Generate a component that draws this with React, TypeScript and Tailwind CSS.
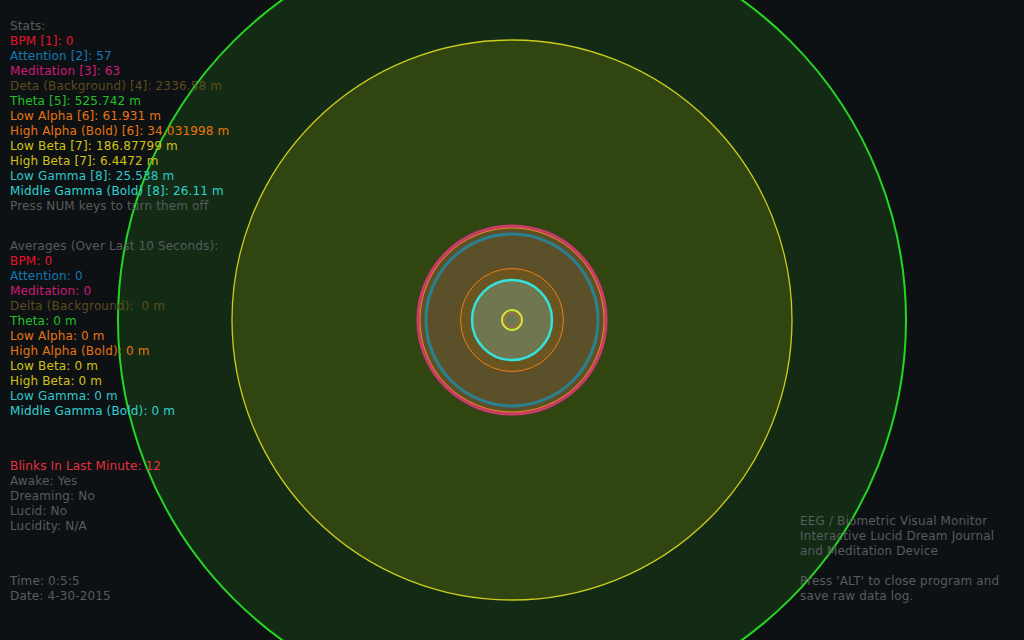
import React from "react";

type Line = { t: string; c: string };

const gray = "text-[#575c5c]";

const stats: Line[] = [
  { t: "Stats:", c: gray },
  { t: "BPM [1]: 0", c: "text-[#e8112b]" },
  { t: "Attention [2]: 57", c: "text-[#1578b0]" },
  { t: "Meditation [3]: 63", c: "text-[#d01a7a]" },
  { t: "Deta (Background) [4]: 2336.58 m", c: "text-[#5c4b1f]" },
  { t: "Theta [5]: 525.742 m", c: "text-[#22c024]" },
  { t: "Low Alpha [6]: 61.931 m", c: "text-[#e87412]" },
  { t: "High Alpha (Bold) [6]: 34.031998 m", c: "text-[#e87412]" },
  { t: "Low Beta [7]: 186.87799 m", c: "text-[#d2c214]" },
  { t: "High Beta [7]: 6.4472 m", c: "text-[#d2c214]" },
  { t: "Low Gamma [8]: 25.538 m", c: "text-[#30c6c6]" },
  { t: "Middle Gamma (Bold) [8]: 26.11 m", c: "text-[#30d2d2]" },
  { t: "Press NUM keys to turn them off", c: gray },
];

const averages: Line[] = [
  { t: "Averages (Over Last 10 Seconds):", c: gray },
  { t: "BPM: 0", c: "text-[#e8112b]" },
  { t: "Attention: 0", c: "text-[#1578b0]" },
  { t: "Meditation: 0", c: "text-[#d01a7a]" },
  { t: "Delta (Background):  0 m", c: "text-[#5c4b1f]" },
  { t: "Theta: 0 m", c: "text-[#22c024]" },
  { t: "Low Alpha: 0 m", c: "text-[#e87412]" },
  { t: "High Alpha (Bold): 0 m", c: "text-[#e87412]" },
  { t: "Low Beta: 0 m", c: "text-[#d2c214]" },
  { t: "High Beta: 0 m", c: "text-[#d2c214]" },
  { t: "Low Gamma: 0 m", c: "text-[#30c6c6]" },
  { t: "Middle Gamma (Bold): 0 m", c: "text-[#30d2d2]" },
];

const state: Line[] = [
  { t: "Blinks In Last Minute: 12", c: "text-[#e8303e]" },
  { t: "Awake: Yes", c: gray },
  { t: "Dreaming: No", c: gray },
  { t: "Lucid: No", c: gray },
  { t: "Lucidity: N/A", c: gray },
];

const time: Line[] = [
  { t: "Time: 0:5:5", c: gray },
  { t: "Date: 4-30-2015", c: gray },
];

function Block({ lines }: { lines: Line[] }) {
  return (
    <div className="flex flex-col">
      {lines.map((l, i) => (
        <div key={i} className={`h-[15px] whitespace-pre ${l.c}`}>
          {l.t}
        </div>
      ))}
    </div>
  );
}

function Rings() {
  const cx = 512;
  const cy = 320;
  return (
    <svg
      className="absolute inset-0"
      width={1024}
      height={640}
      viewBox="0 0 1024 640"
    >
      <circle cx={cx} cy={cy} r={394} fill="#132b14" stroke="#24d624" strokeWidth={2} />
      <circle cx={cx} cy={cy} r={280} fill="#30450f" stroke="#cccc1c" strokeWidth={1.3} />
      <circle cx={cx} cy={cy} r={94} fill="#5b5029" stroke="#cc3a6c" strokeWidth={3.2} />
      <circle cx={cx} cy={cy} r={92} fill="none" stroke="#ea8a12" strokeWidth={1} />
      <circle cx={cx} cy={cy} r={86} fill="none" stroke="#2a8290" strokeWidth={3} />
      <circle cx={cx} cy={cy} r={51.5} fill="#6a5420" stroke="#ea8210" strokeWidth={1} />
      <circle cx={cx} cy={cy} r={40} fill="#6f7650" stroke="#34e2da" strokeWidth={2.5} />
      <circle cx={cx} cy={cy} r={10} fill="#6a7a50" stroke="#d8e030" strokeWidth={2} />
      <circle cx={cx} cy={cy} r={7} fill="none" stroke="#d0604a" strokeWidth={1} />
      <circle cx={cx} cy={cy} r={4.5} fill="none" stroke="#7a7048" strokeWidth={0.8} />
    </svg>
  );
}

export default function App() {
  return (
    <div
      className="relative w-[1024px] h-[640px] overflow-hidden bg-[#0d1114] text-[12px] leading-[15px] tracking-[0.15px]"
      style={{ fontFamily: '"DejaVu Sans", Verdana, sans-serif' }}
    >
      <Rings />
      <div className="relative flex h-full">
        <div className="flex flex-col pl-[10px] pt-[19px]">
          <Block lines={stats} />
          <div className="h-[25px]" />
          <Block lines={averages} />
          <div className="h-[40px]" />
          <Block lines={state} />
          <div className="h-[40px]" />
          <Block lines={time} />
        </div>
        <div className="ml-auto flex w-[224px] flex-col justify-end pb-[36px] text-[#575c5c]">
          <div className="h-[15px] whitespace-pre">EEG / Biometric Visual Monitor</div>
          <div className="h-[15px] whitespace-pre">Interactive Lucid Dream Journal</div>
          <div className="h-[15px] whitespace-pre">and Meditation Device</div>
          <div className="h-[15px]" />
          <div className="h-[15px] whitespace-pre">Press 'ALT' to close program and</div>
          <div className="h-[15px] whitespace-pre">save raw data log.</div>
        </div>
      </div>
    </div>
  );
}
